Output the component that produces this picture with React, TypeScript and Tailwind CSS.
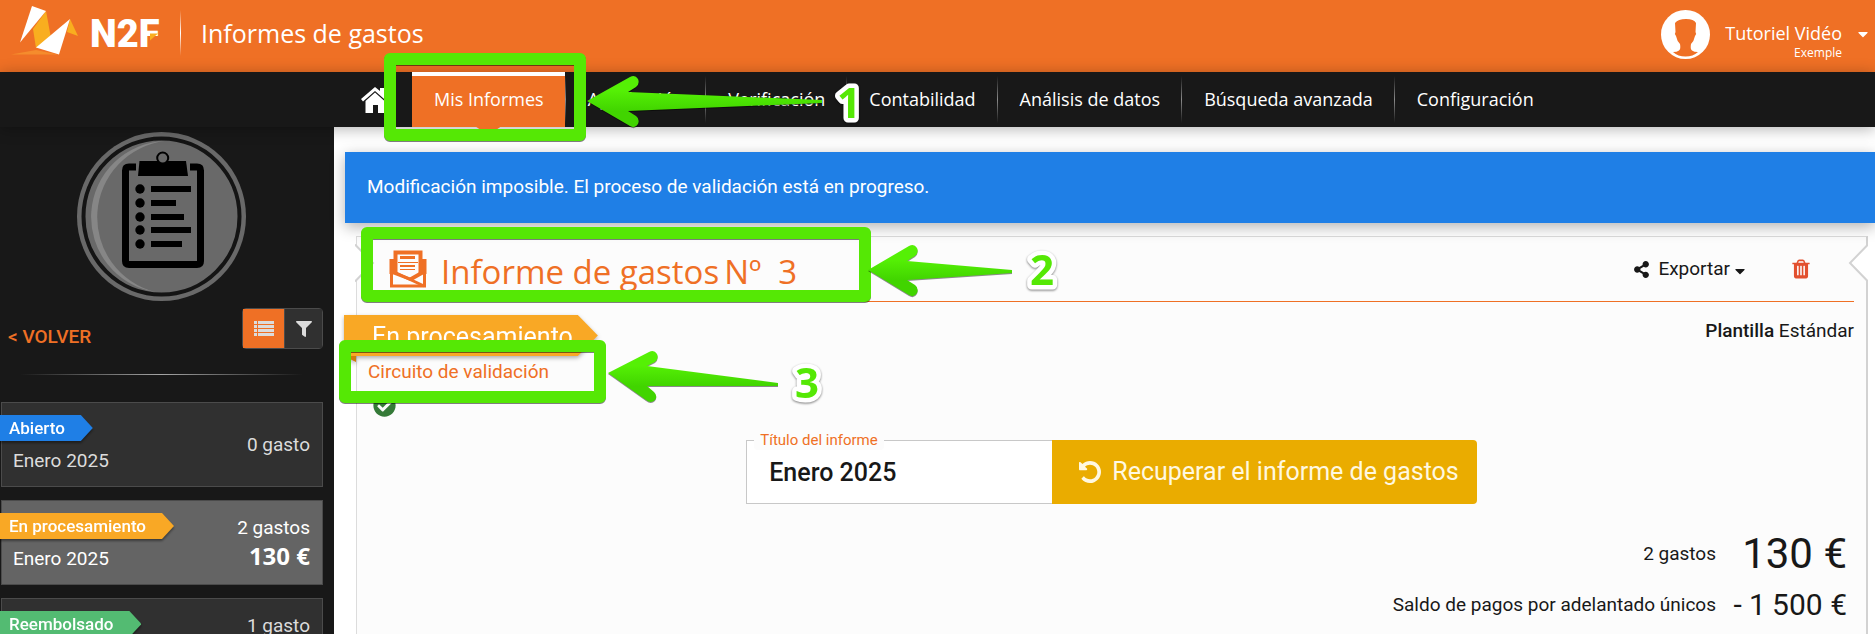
import { FaCaretDown, FaCheckCircle, FaFilter, FaShareAlt } from 'react-icons/fa'

const navItems = ['Mis Informes', 'Aprobación', 'Verificación', 'Contabilidad', 'Análisis de datos', 'Búsqueda avanzada', 'Configuración']

const reports = [
  { status: 'Abierto', color: 'bg-[#1f7fe6]', title: 'Enero 2025', count: '0 gasto', active: false },
  { status: 'En procesamiento', color: 'bg-[#f9a825]', title: 'Enero 2025', count: '2 gastos', amount: '130 €', active: true },
  { status: 'Reembolsado', color: 'bg-[#53bb72]', title: '', count: '1 gasto', amount: '', active: false },
]

function Logo() {
  return (
    <svg className="w-40 h-[72px]" viewBox="0 0 160 72" role="img" aria-label="N2F">
      <path d="M11 54.500L36 50l22 4.500z" fill="#f58c2d" />
      <path d="M46 11l5 27-15 10-3-19z" fill="#f9ae1f" />
      <path d="M32 6l14 5-26 31.500z" fill="#fff" />
      <path d="M70 19l8 17-11-4z" fill="#f9ae1f" />
      <path d="M70 19L59 54.500 36 47.500z" fill="#fff" />
      <text x="90" y="47" fill="#fff" className="font-['Roboto',sans-serif] font-black text-[38px]">N2F</text>
      <path d="M150 33.500h8l-8 7z" fill="#f9ae1f" />
    </svg>
  )
}

function Avatar() {
  return (
    <svg className="w-[49px] h-[49px]" viewBox="0 0 49 49">
      <circle cx="24.500" cy="24.500" r="24.500" fill="#fff" />
      <path
        d="M14 13q3-4 11-4t10 4l-.5 9q1.500 2-.5 4-1 5-4 8-1 5 1 6.500 2 1.500 6 1.500-5 4.500-12.500 4.500T12 42q4 0 6-1.500 2-1.500 1-6.500-3-3-4-8-2-2-.5-4z"
        fill="#ef7025"
      />
    </svg>
  )
}

function HomeIcon() {
  return (
    <svg className="w-7 h-[26px]" viewBox="0 0 28 26" fill="#fff">
      <path d="M14 0l5 4V1h4v6.500l5 4.500-2 2.500L14 4 2 14.500 0 12z" />
      <path d="M14 5.500l9.500 8.500v12H17v-8h-5v8H4.500V14z" />
    </svg>
  )
}

function Clipboard() {
  return (
    <svg className="w-[169px] h-[169px]" viewBox="0 0 169 169">
      <circle cx="84.500" cy="84.500" r="84.500" fill="#696969" />
      <circle cx="84.500" cy="84.500" r="78" fill="none" stroke="#141414" strokeWidth="4" />
      <path d="M88 9A76 76 0 0 0 78 160 77 77 0 0 1 88 9z" fill="#868686" />
      <path d="M59 35H52q-3.500 0-3.500 3.500V129q0 3.500 3.500 3.500h68q3.500 0 3.500-3.500V38.500q0-3.500-3.500-3.500h-7" fill="none" stroke="#000" strokeWidth="7" />
      <path d="M62.500 29h46.500l2 15H61z" />
      <circle cx="85.700" cy="26" r="5.500" fill="#696969" stroke="#000" strokeWidth="2" />
      <circle cx="63" cy="57" r="4.700" />
      <circle cx="63" cy="71" r="4.700" />
      <circle cx="63" cy="85" r="4.700" />
      <circle cx="63" cy="98" r="4.700" />
      <circle cx="63" cy="112" r="4.700" />
      <path d="M74 54h40v6H74zM74 68h25v6H74zM74 82h33v6H74zM74 95h40v6H74zM74 109h31v6H74z" />
    </svg>
  )
}

function ListIcon() {
  return (
    <svg className="w-5 h-[15px]" viewBox="0 0 20 15" fill="currentColor">
      <path d="M0 0h3v3H0zM4 0h16v3H4zM0 4h3v3H0zM4 4h16v3H4zM0 8h3v3H0zM4 8h16v3H4zM0 12h3v3H0zM4 12h16v3H4z" />
    </svg>
  )
}

function EnvelopeIcon() {
  return (
    <svg className="w-[38px] h-[38px]" viewBox="0 0 38 38" fill="none" stroke="#ef7025">
      <path d="M3 24V9M35 24V9" strokeWidth="5" />
      <path d="M6.500 23V2.500h25V23" fill="#fcfcfc" strokeWidth="4" />
      <path d="M11 7.500h15" strokeWidth="3" />
      <path d="M9 12.500h20M11 19.500h15" strokeWidth="1" />
      <path d="M11 16h15" strokeWidth="2" />
      <path d="M2.500 22v14h33V22L22 29.500z" fill="#fcfcfc" strokeWidth="3" />
      <path d="M2 20.500L35 36M36 20.500L21 29" strokeWidth="3" />
    </svg>
  )
}

function TrashIcon() {
  return (
    <svg className="w-[22px] h-[22px]" viewBox="0 0 1792 1792" fill="currentColor">
      <path d="M704 1376v-704q0-14-9-23t-23-9h-64q-14 0-23 9t-9 23v704q0 14 9 23t23 9h64q14 0 23-9t9-23zm256 0v-704q0-14-9-23t-23-9h-64q-14 0-23 9t-9 23v704q0 14 9 23t23 9h64q14 0 23-9t9-23zm256 0v-704q0-14-9-23t-23-9h-64q-14 0-23 9t-9 23v704q0 14 9 23t23 9h64q14 0 23-9t9-23zm-544-992h448l-48-117q-7-9-17-11h-317q-10 2-17 11zm928 32v64q0 14-9 23t-23 9h-96v948q0 83-47 143.500t-113 60.500h-832q-66 0-113-58.500t-47-141.500v-952h-96q-14 0-23-9t-9-23v-64q0-14 9-23t23-9h309l70-167q15-37 54-63t79-26h320q40 0 79 26t54 63l70 167h309q14 0 23 9t9 23z" />
    </svg>
  )
}

function UndoIcon() {
  return (
    <svg className="w-[22px] h-[22px]" viewBox="128 128 1536 1536" fill="currentColor">
      <path d="M1664 896q0 156-61 298t-164 245-245 164-298 61q-172 0-327-72.500t-264-204.500q-7-10-6.500-22.500t8.500-20.500l137-138q10-9 25-9 16 2 23 12 73 95 179 147t225 52q104 0 198.500-40.500t163.500-109.500 109.500-163.500 40.500-198.500-40.500-198.500-109.500-163.500-163.500-109.500-198.500-40.500q-98 0-188 35.500t-160 101.500l137 138q31 30 14 69-17 40-59 40h-448q-26 0-45-19t-19-45v-448q0-42 40-59 39-17 69 14l130 129q107-101 244.500-156.500t284.500-55.500q156 0 298 61t245 164 164 245 61 298z" />
    </svg>
  )
}

// Notch cut in the side of the report panel
function Notch({ className }: { className: string }) {
  return (
    <svg className={`absolute top-1.5 w-5 h-10 ${className}`} viewBox="0 0 20 40">
      <path d="M20 2L2 20l18 18z" fill="#fff" />
      <path d="M20 1.500L2 20l18 18.500" fill="none" stroke="#d2d2d2" strokeWidth="2" />
    </svg>
  )
}

function Arrow({ className, viewBox, shaft }: { className: string; viewBox: string; shaft: string }) {
  return (
    <svg className={`absolute overflow-visible drop-shadow-[0_1px_0_rgba(0,0,0,0.45)] ${className}`} viewBox={viewBox}>
      <defs>
        <linearGradient id="arrow" x1="0" y1="0" x2="0" y2="52" gradientUnits="userSpaceOnUse">
          <stop offset="0.300" stopColor="#55f005" />
          <stop offset="0.700" stopColor="#41d400" />
        </linearGradient>
      </defs>
      <path d={shaft} fill="url(#arrow)" />
    </svg>
  )
}

function Step({ n, className }: { n: number; className: string }) {
  return (
    <svg className={`absolute w-10 h-12 drop-shadow-[0_1px_1px_rgba(0,0,0,0.5)] ${className}`} viewBox="0 0 40 48">
      <text
        x="20"
        y="39"
        textAnchor="middle"
        fill="#55e805"
        stroke="#fff"
        strokeWidth="9"
        strokeLinejoin="round"
        paintOrder="stroke"
        className="font-['Open_Sans',sans-serif] font-bold text-[42px]"
      >
        {n}
      </text>
    </svg>
  )
}

const highlight = 'absolute border-[12px] border-[#55e805] rounded-md drop-shadow-[0_1px_0_rgba(0,0,0,0.5)]'

function Annotations() {
  return (
    <div className="absolute inset-0 z-20 pointer-events-none">
      <div className={`${highlight} left-[384px] top-[53px] w-[202px] h-[88px]`} />
      <Arrow
        className="left-[587px] top-[75px] w-[236px] h-[52px]"
        viewBox="0 0 236 52"
        shaft="M0 26L43 2q5-3 8 2 2 5-2 8l-8 5 194 8v3L41 36l8 5q4 3 2 8-3 5-8 2z"
      />
      <Step n={1} className="left-[829px] top-[79px]" />

      <div className={`${highlight} left-[361px] top-[227px] w-[510px] h-[75px]`} />
      <Arrow
        className="left-[868px] top-[244px] w-[145px] h-[52px]"
        viewBox="0 0 145 52"
        shaft="M0 26L41 2q5-3 8 2 2 5-2 8l-8 5 105 9v3L39 36l8 5q4 3 2 8-3 5-8 2z"
      />
      <Step n={2} className="left-[1022px] top-[246px]" />

      <div className={`${highlight} left-[339px] top-[340px] w-[267px] h-[63px]`} />
      <Arrow
        className="left-[608px] top-[350px] w-[171px] h-[52px]"
        viewBox="0 0 171 52"
        shaft="M0 23L41 2q5-3 8 2 2 5-2 8l-8 4 131 17v3L39 36l7 6q4 4 1 8-4 4-9 0z"
      />
      <Step n={3} className="left-[787px] top-[359px]" />
    </div>
  )
}

function ReportCard({ report }: { report: (typeof reports)[number] }) {
  return (
    <a
      href="#"
      className={`flex h-[85px] shrink-0 items-start justify-between border border-[#4b4b4b] pr-3 ${
        report.active ? 'bg-[#646464] text-white' : 'bg-[#303030] text-[#dcdcdc]'
      }`}
    >
      <div className="-ml-0.5 pt-3">
        <div className="flex drop-shadow-[0_2px_1px_rgba(0,0,0,0.4)]">
          <span
            className={`h-[26px] pl-[9px] pr-7 text-[17px] leading-[26px] font-medium text-white [clip-path:polygon(0_0,calc(100%-12px)_0,100%_50%,calc(100%-12px)_100%,0_100%)] ${report.color}`}
          >
            {report.status}
          </span>
        </div>
        <p className="mt-2 pl-[13px] text-[19px] leading-6">{report.title}</p>
      </div>
      <div className="flex h-full flex-col items-end justify-center text-[19px] leading-7">
        <span>{report.count}</span>
        {report.amount !== undefined && (
          <b className="h-[30px] font-['Open_Sans',sans-serif] text-2xl leading-[28px]">{report.amount}</b>
        )}
      </div>
    </a>
  )
}

export default function App() {
  return (
    <div className="relative flex h-screen flex-col overflow-hidden bg-white font-['Roboto',sans-serif] text-[19px] text-[#181818]">
      <header className="flex h-[72px] shrink-0 bg-[#ef7025] font-['Open_Sans',sans-serif] text-white">
        <Logo />
        <div className="ml-5 mt-2.5 h-[46px] w-px bg-linear-to-b from-transparent via-white to-transparent" />
        <h1 className="ml-5 text-[25px] leading-[66px]">Informes de gastos</h1>
        <button className="ml-auto flex items-start gap-[15px] pt-2.5 pr-1.5">
          <Avatar />
          <span className="flex flex-col items-end pt-[11px]">
            <span className="text-lg leading-6">Tutoriel Vidéo</span>
            <span className="text-xs leading-4">Exemple</span>
          </span>
          <FaCaretDown className="mt-4 h-4 w-3" />
        </button>
      </header>

      <nav className="relative z-10 flex h-[55px] shrink-0 bg-[#181818] pl-[340px] font-['Open_Sans',sans-serif] text-lg text-white shadow-[0_2px_14px_rgba(0,0,0,0.3)]">
        <a href="#" aria-label="Inicio" className="flex w-[72px] items-center pl-[21px]">
          <HomeIcon />
        </a>
        {navItems.map((item, i) => (
          <div key={item} className="flex">
            <a
              href="#"
              className={`relative flex items-center border-t-4 pr-[21px] pb-1.5 pl-[22px] ${i === 0 ? 'border-white bg-[#ef7025]' : 'border-transparent'}`}
            >
              {item}
              {i === 0 && (
                <span className="absolute top-full left-1/2 h-2 w-6 -translate-x-1/2 bg-[#ef7025] [clip-path:polygon(0_0,100%_0,50%_100%)]" />
              )}
            </a>
            {i < navItems.length - 1 && (
              <span className="my-1 w-px bg-linear-to-b from-transparent via-[#8a8a8a] to-transparent" />
            )}
          </div>
        ))}
      </nav>

      <div className="flex min-h-0 flex-1">
        <aside className="flex w-[334px] shrink-0 flex-col overflow-hidden bg-[#181818] pt-[5px] pr-[11px]">
          <div className="flex justify-center">
            <Clipboard />
          </div>
          <div className="mt-[7px] flex items-end justify-between pl-2">
            <a href="#" className="leading-6 font-medium text-[#ef7025]">&lt; VOLVER</a>
            <div className="flex h-[41px] rounded-sm border border-[#4b4b4b] text-[#dcdcdc]">
              <button aria-label="Lista" className="flex w-[41px] items-center justify-center bg-[#ef7025]">
                <ListIcon />
              </button>
              <button aria-label="Filtrar" className="flex w-[38px] items-center justify-center border-l border-[#4b4b4b] bg-[#303030]">
                <FaFilter className="h-4 w-4" />
              </button>
            </div>
          </div>
          <div className="mx-5 mt-[25px] h-px shrink-0 bg-linear-to-r from-transparent via-[#a5a5a5] to-transparent" />
          <div className="mt-[27px] ml-px flex flex-col gap-[13px]">
            {reports.map((report) => (
              <ReportCard key={report.status} report={report} />
            ))}
          </div>
        </aside>

        <main className="flex min-w-0 flex-1 flex-col pt-[25px]">
          <div role="alert" className="relative z-10 ml-[11px] flex h-[71px] shrink-0 items-center bg-[#1f7fe6] px-[22px] text-white shadow-[0_4px_14px_rgba(0,0,0,0.3)]">
            Modificación imposible. El proceso de validación está en progreso.
          </div>

          <section className="relative mt-[13px] mr-[7px] ml-[22px] flex-1 border-t border-r-2 border-l border-t-[#dcdcdc] border-r-[#d2d2d2] border-l-[#dcdcdc] bg-[#fcfcfc]">
            <Notch className="-right-0.5" />
            <Notch className="-left-0.5 -scale-x-100" />

            <div className="mx-3 flex h-[65px] items-center border-b border-[#ef7025] pr-[42px] pl-5">
              <EnvelopeIcon />
              <h2 className="ml-3.5 flex gap-[5px] pt-1.5 font-['Open_Sans',sans-serif] text-[33px] leading-10 text-[#ef7025]">
                <span>Informe de gastos</span>
                <span>Nº</span>
                <span className="ml-3">3</span>
              </h2>
              <button className="ml-auto flex items-center">
                <FaShareAlt className="h-[17px] w-[17px]" />
                <span className="ml-2">Exportar</span>
                <FaCaretDown className="mt-1 ml-1 h-4 w-3" />
              </button>
              <button aria-label="Eliminar" className="ml-11 text-[#e2502f]">
                <TrashIcon />
              </button>
            </div>

            <div className="flex items-start justify-between pt-[13px] pr-3">
              <div>
                <div className="relative -ml-[13px] drop-shadow-[0_2px_2px_rgba(0,0,0,0.3)]">
                  <span className="inline-block h-[41px] bg-[#f9a825] pr-[25px] pl-7 align-top text-[25px] leading-[44px] text-white [clip-path:polygon(0_0,calc(100%-20px)_0,100%_50%,calc(100%-20px)_100%,0_100%)]">
                    En procesamiento
                  </span>
                  <span className="absolute top-full left-0 h-1.5 w-3 bg-[#d07c0c] [clip-path:polygon(0_0,100%_0,100%_100%)]" />
                </div>
                <a href="#" className="mt-1.5 ml-[11px] block leading-5 text-[#ef7025]">Circuito de validación</a>
                <FaCheckCircle className="mt-3 ml-4 h-[23px] w-[23px] text-[#357a38]" />
              </div>
              <p className="pt-0.5 leading-7">
                <span className="font-medium">Plantilla</span> Estándar
              </p>
            </div>

            <form className="mt-[23px] flex h-16 justify-center">
              <div className="relative w-[306px]">
                <label htmlFor="titulo" className="absolute -top-2.5 left-2 rounded-sm bg-[#fcfcfc] px-1.5 text-[15px] leading-5 text-[#ef7025]">
                  Título del informe
                </label>
                <input
                  id="titulo"
                  defaultValue="Enero 2025"
                  className="h-full w-full border border-r-0 border-[#c8c8c8] bg-white px-[22px] text-[25px] font-medium outline-none"
                />
              </div>
              <button type="button" className="flex items-center gap-[11px] rounded-r-sm bg-[#eaac00] pr-[18px] pl-[27px] text-[25px] text-[#fff8e1]">
                <UndoIcon />
                Recuperar el informe de gastos
              </button>
            </form>

            <dl className="mt-[25px] grid grid-cols-[1fr_118px] gap-x-[13px] pr-[19px] text-right">
              <dt className="leading-[50px]">2 gastos</dt>
              <dd className="text-[42px] leading-[50px]">130 €</dd>
              <dt className="leading-[52px]">Saldo de pagos por adelantado únicos</dt>
              <dd className="text-3xl leading-[52px] whitespace-nowrap">-&nbsp;1&thinsp;500 €</dd>
            </dl>
          </section>
        </main>
      </div>

      <Annotations />
    </div>
  )
}
